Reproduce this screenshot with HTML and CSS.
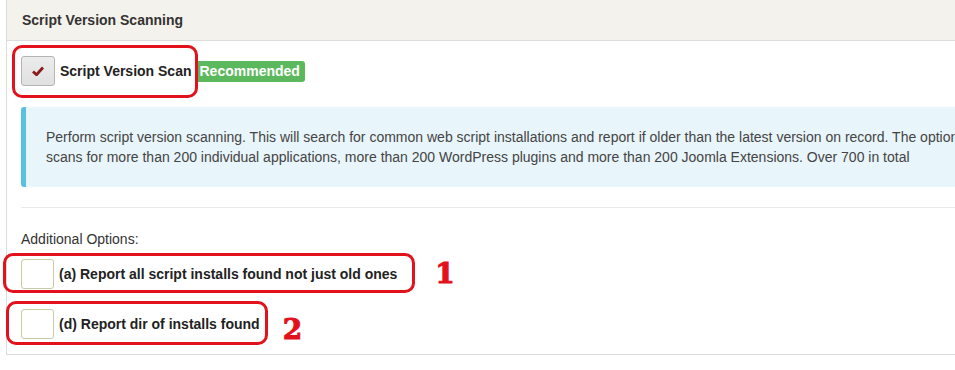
FILE: index.html
```html
<!DOCTYPE html>
<html lang="en">
<head>
    <meta charset="UTF-8">
    <title>Script Version Scanning</title>
    <link rel="stylesheet" href="styles.css">
</head>
<body>
<div class="panel">
    <div class="panel-heading">Script Version Scanning</div>
    <div class="panel-body">
        <div class="option main-option">
            <span class="check-box checked">
                <svg width="12" height="10" viewBox="0 0 12 10"><path d="M1 5.5 L4.5 8.8 L11 1.5" fill="none" stroke="#8b1a1a" stroke-width="2.8" stroke-linejoin="round"/></svg>
            </span>
            <span class="option-label">Script Version Scan</span>
            <span class="badge">Recommended</span>
            <span class="ring ring-main"></span>
        </div>

        <div class="info-box">
            Perform script version scanning. This will search for common web script installations and report if older than the latest version on record. The options<br>
            scans for more than 200 individual applications, more than 200 WordPress plugins and more than 200 Joomla Extensions. Over 700 in total
        </div>

        <hr class="divider">

        <div class="section-title">Additional Options:</div>

        <div class="option">
            <span class="check-box"></span>
            <span class="option-label">(a) Report all script installs found not just old ones</span>
            <span class="marker marker-one">1</span>
            <span class="ring ring-a"></span>
        </div>

        <div class="option option-last">
            <span class="check-box"></span>
            <span class="option-label">(d) Report dir of installs found</span>
            <span class="marker marker-two">2</span>
            <span class="ring ring-d"></span>
        </div>
    </div>
</div>
</body>
</html>
```

FILE: styles.css
```css
* {
    box-sizing: border-box;
    margin: 0;
    padding: 0;
}

body {
    font-family: 'Liberation Sans', Arial, sans-serif;
    font-size: 14px;
    color: #333;
    background-color: #fff;
    overflow: hidden;
}

.panel {
    margin: 0 -60px 0 6px;
    border: 1px solid #dcdcdc;
    border-top: none;
    background-color: #fff;
}

.panel-heading {
    height: 41px;
    padding: 0 15px;
    display: flex;
    align-items: center;
    background-color: #f3f2ec;
    border-bottom: 1px solid #dcdcdc;
    font-weight: bold;
    color: #333;
}

.panel-body {
    padding: 15px 14px 15px 14px;
}

.option {
    position: relative;
    display: flex;
    align-items: center;
    height: 30px;
    margin-top: 20px;
}

.main-option {
    margin-top: 0;
}

.check-box {
    width: 33px;
    height: 30px;
    border: 1px solid #c9caa6;
    border-radius: 3px;
    background-color: #fff;
    display: flex;
    align-items: center;
    justify-content: center;
    flex-shrink: 0;
}

.check-box.checked {
    width: 34px;
    border-color: #b4b4b4;
    background: linear-gradient(#ececec, #e0e0e0);
}

.option-label {
    margin-left: 5px;
    font-weight: bold;
    color: #222;
}

.badge {
    margin-left: 3px;
    padding: 0 5px;
    height: 21px;
    line-height: 21px;
    background-color: #5cb85c;
    color: #fff;
    font-weight: bold;
    border-radius: 3px;
}

.info-box {
    margin-top: 21px;
    padding: 20px 20px 20px 20px;
    line-height: 20px;
    background-color: #e8f5fa;
    border-left: 5px solid #5bc0de;
    border-radius: 3px;
    color: #444;
    white-space: nowrap;
}

.divider {
    border: none;
    border-top: 1px solid #e8e8e8;
    margin: 20px 0 0 0;
}

.section-title {
    margin-top: 21px;
    line-height: 20px;
    color: #333;
}

.section-title + .option {
    margin-top: 10px;
}

.ring {
    position: absolute;
    border: 3px solid #e2111b;
    border-radius: 10px;
    pointer-events: none;
}

.ring-main {
    left: -9px;
    top: -11px;
    width: 186px;
    height: 53px;
}

.ring-a {
    left: -18px;
    top: -6px;
    width: 412px;
    height: 40px;
}

.ring-d {
    left: -15px;
    top: -8px;
    width: 262px;
    height: 44px;
}

.marker {
    font-family: 'DejaVu Serif', serif;
    font-weight: bold;
    font-size: 28px;
    line-height: 30px;
    color: #e2111b;
    -webkit-text-stroke: 1px #e2111b;
}

.marker-one {
    margin-left: 38px;
}

.marker-two {
    margin-left: 23px;
    margin-top: 12px;
}
```
